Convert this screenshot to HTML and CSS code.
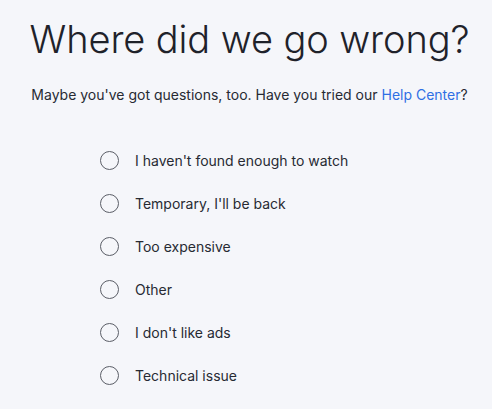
FILE: index.html
```html
<!DOCTYPE html>
<html>
<head>
<meta charset="utf-8">
<link rel="stylesheet" href="styles.css">
</head>
<body>
<main class="page">
  <h1 class="title">Where did we go wrong?</h1>
  <p class="intro">Maybe you've got questions, too. Have you tried our <a class="link" href="#">Help Center</a>?</p>
  <ul class="options">
    <li class="option"><span class="radio"></span><span class="label">I haven't found enough to watch</span></li>
    <li class="option"><span class="radio"></span><span class="label">Temporary, I'll be back</span></li>
    <li class="option"><span class="radio"></span><span class="label">Too expensive</span></li>
    <li class="option"><span class="radio"></span><span class="label">Other</span></li>
    <li class="option"><span class="radio"></span><span class="label">I don't like ads</span></li>
    <li class="option"><span class="radio"></span><span class="label">Technical issue</span></li>
  </ul>
</main>
</body>
</html>
```
FILE: styles.css
```css
html, body {
  margin: 0;
  background: #f5f6fa;
}
.page {
  padding: 15px 0 0 7px;
  display: flex;
  flex-direction: column;
  align-items: center;
  font-family: Inter, "Liberation Sans", sans-serif;
  color: #272a33;
}
.title {
  margin: 0;
  font-weight: 300;
  font-size: 38px;
  line-height: 48px;
  letter-spacing: -0.1px;
  color: #1f222a;
}
.intro {
  margin: 22px 0 0 0;
  font-size: 14px;
  line-height: 20px;
  color: #272a33;
}
.link {
  color: #2f6fe4;
  text-decoration: none;
}
.options {
  list-style: none;
  margin: 44px 0 0 0;
  padding: 0 0 0 93px;
  align-self: flex-start;
  display: flex;
  flex-direction: column;
  gap: 21px;
}
.option {
  display: flex;
  align-items: center;
  gap: 16px;
  height: 22px;
}
.radio {
  width: 17px;
  height: 17px;
  border: 1.5px solid #5b5e67;
  border-radius: 50%;
  box-sizing: content-box;
}
.label {
  font-size: 14px;
  color: #272a33;
}
```
